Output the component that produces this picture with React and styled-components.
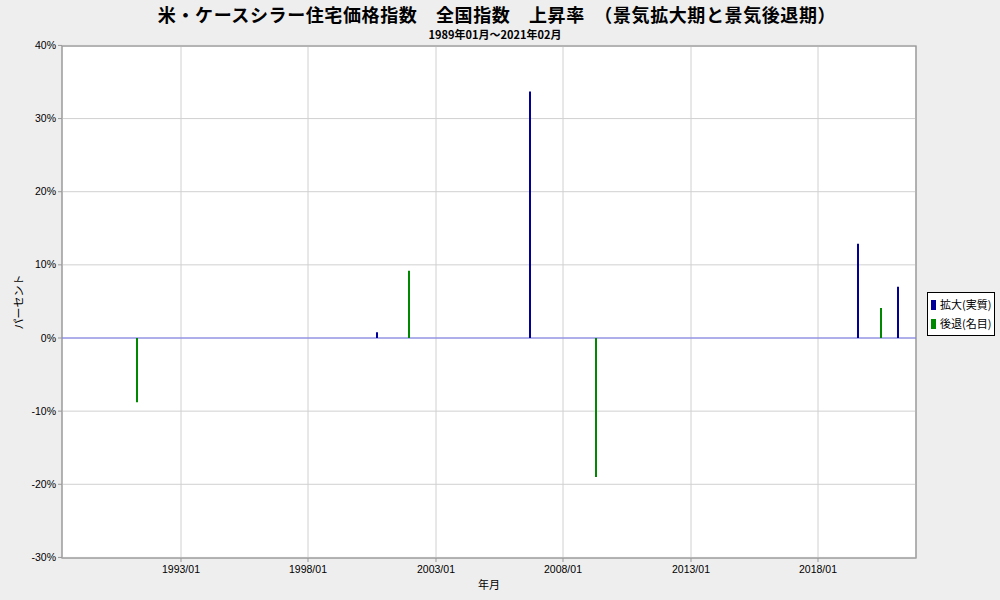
import React from "react";
import styled, { createGlobalStyle } from "styled-components";

const Global = createGlobalStyle`
  body { margin: 0; background: #eeeeee; font-family: "Liberation Sans", "Noto Sans CJK JP", sans-serif; }
`;

const Page = styled.div`
  width: 1000px; height: 600px; display: flex; flex-direction: column; overflow: hidden;
`;
const Header = styled.div`
  height: 40px; display: flex; flex-direction: column; align-items: center;
`;
const Title = styled.div`
  font-size: 18px; font-weight: bold; margin-top: 4px; line-height: 20px; letter-spacing: 0.6px;
  font-family: "Noto Sans CJK JP", sans-serif; margin-left: -6px;
`;
const Sub = styled.div`
  font-size: 11px; font-weight: bold; line-height: 14px; margin-top: 3px;
  font-family: "Noto Sans CJK JP", sans-serif; margin-left: -10px;
`;
const Body = styled.div`display: flex; align-items: flex-start;`;
const Legend = styled.div`
  margin: 252px 0 0 7px; border: 1px solid #000; background: #fff;
  padding: 2px 3px; display: flex; flex-direction: column;
`;
const Item = styled.div`
  display: flex; align-items: center; gap: 4px; font-size: 11px; line-height: 19px;
  font-family: "Noto Sans CJK JP", sans-serif;
`;
const Swatch = styled.span`width: 5px; height: 10px; background: ${p => p.c};`;

const top = 46, bottom = 558, left = 62, right = 916;
const yOf = v => 338 - v * (512 / 70);
const ticks = [40, 30, 20, 10, 0, -10, -20, -30];
const xt = [[181, "1993/01"], [308, "1998/01"], [436, "2003/01"], [563, "2008/01"], [691, "2013/01"], [818, "2018/01"]];
const bars = [
  [137, -8.8, "green"], [377, 0.8, "navy"], [409, 9.2, "green"], [530, 33.7, "navy"],
  [596, -19, "green"], [858, 12.9, "navy"], [881, 4.1, "green"], [898, 7, "navy"],
];
const BLUE = "#000099", GREEN = "#008800";

export default function App() {
  return (
    <Page>
      <Global />
      <Header>
        <Title>米・ケースシラー住宅価格指数　全国指数　上昇率　（景気拡大期と景気後退期）</Title>
        <Sub>1989年01月～2021年02月</Sub>
      </Header>
      <Body>
        <svg width="920" height="560" viewBox="0 40 920 560" style={{ display: "block" }}>
          <rect x={left} y={top} width={right - left} height={bottom - top} fill="#fff" stroke="#999" />
          {ticks.map(t => (
            <g key={t}>
              <line x1={left} x2={right} y1={yOf(t)} y2={yOf(t)} stroke="#d0d0d0" />
              <line x1={left - 4} x2={left} y1={yOf(t)} y2={yOf(t)} stroke="#999" />
              <text x={left - 6} y={yOf(t) + 3.5} fontSize="10.5" textAnchor="end" fontFamily="Liberation Sans">{t}%</text>
            </g>
          ))}
          {xt.map(([x, l]) => (
            <g key={l}>
              <line x1={x} x2={x} y1={top} y2={bottom} stroke="#d0d0d0" />
              <line x1={x} x2={x} y1={bottom} y2={bottom + 4} stroke="#999" />
              <text x={x} y={bottom + 15} fontSize="10.5" textAnchor="middle" fontFamily="Liberation Sans">{l}</text>
            </g>
          ))}
          <rect x={left} y={top} width={right - left} height={bottom - top} fill="none" stroke="#999" />
          <line x1={left} x2={right} y1={338} y2={338} stroke="#7777ee" />
          {bars.map(([x, v, c]) => (
            <line key={x} x1={x} x2={x} y1={338} y2={yOf(v)} stroke={c === "navy" ? BLUE : GREEN} strokeWidth="2" />
          ))}
          <text x={489} y={589} fontSize="11" textAnchor="middle" fontFamily="Noto Sans CJK JP">年月</text>
          <text transform="translate(23 302) rotate(-90)" fontSize="11" textAnchor="middle" fontFamily="Noto Sans CJK JP">パーセント</text>
        </svg>
        <Legend>
          <Item><Swatch c={BLUE} />拡大(実質)</Item>
          <Item><Swatch c={GREEN} />後退(名目)</Item>
        </Legend>
      </Body>
    </Page>
  );
}
